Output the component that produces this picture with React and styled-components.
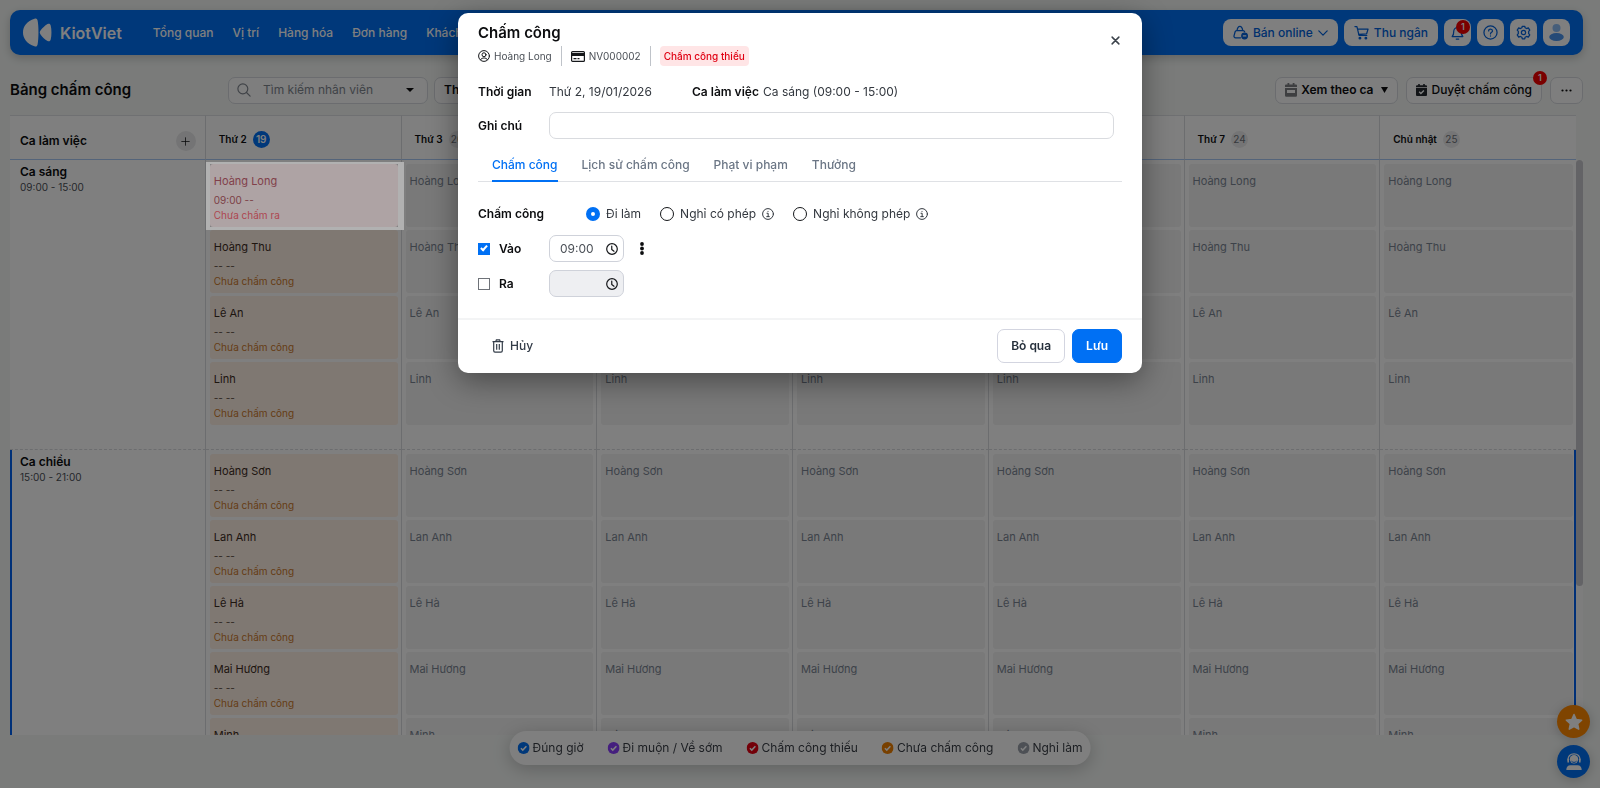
import React from "react";
import styled, { createGlobalStyle, css } from "styled-components";

const Global = createGlobalStyle`
  *, *::before, *::after { box-sizing: border-box; }
  body { margin: 0; background: #f4f7f5; font-family: Inter, "Liberation Sans", sans-serif; font-size: 12px; line-height: 16px; color: #0c0d0f; }
  button, input { font: inherit; color: inherit; }
  button { cursor: pointer; }
  h1, h2, p { margin: 0; }
`;

const Page = styled.div`
  height: 100vh;
  display: flex;
  flex-direction: column;
  padding: 10px 17px 53px 10px;
`;

const NavBar = styled.header`
  display: flex;
  align-items: center;
  height: 45px;
  flex: none;
  padding: 0 13px;
  border-radius: 10px;
  background: #0070f4;
  box-shadow: 0 3px 10px rgba(0, 0, 0, 0.2);
`;

const Brand = styled.a`
  display: flex;
  align-items: center;
  gap: 8px;
  margin-right: 31px;
  color: #fff;
  font-size: 16px;
  font-weight: 600;
  text-decoration: none;
`;

const Menu = styled.nav`
  display: flex;
  gap: 19px;
  flex: 1;
  min-width: 0;
`;

const MenuLink = styled.a`
  color: #fff;
  font-weight: 500;
  text-decoration: none;
  white-space: nowrap;
`;

const NavActions = styled.div`
  display: flex;
  gap: 6px;
  color: #0061dc;
`;

const NavButton = styled.button`
  position: relative;
  display: flex;
  align-items: center;
  justify-content: center;
  gap: 5px;
  height: 27px;
  min-width: 27px;
  padding: 0 ${(p) => (p.$wide ? "10px" : "0")};
  border: 0;
  border-radius: 8px;
  background: #fff;
  color: inherit;
  font-weight: 500;
`;

const CountBadge = styled.span`
  position: absolute;
  top: ${(p) => p.$top};
  right: ${(p) => p.$right};
  min-width: 14px;
  height: 14px;
  border-radius: 7px;
  background: #f50000;
  color: #fff;
  font-size: 9px;
  line-height: 14px;
  font-weight: 600;
  text-align: center;
`;

const Toolbar = styled.div`
  display: flex;
  align-items: center;
  flex: none;
  gap: 6px;
  height: 60px;
  padding-top: 10px;
`;

const PageTitle = styled.h1`
  width: 212px;
  font-size: 15px;
  line-height: 20px;
  font-weight: 600;
`;

const SearchBox = styled.label`
  display: flex;
  align-items: center;
  width: 200px;
  height: 27px;
  padding: 0 13px 0 8px;
  border: 1px solid #d6d9de;
  border-radius: 7px;
  background: #fcfcfc;

  > svg:first-child { color: #80868f; }

  input {
    flex: 1;
    min-width: 0;
    margin-left: 12px;
    border: 0;
    padding: 0;
    outline: 0;
    background: transparent;
  }
  input::placeholder { color: #80868f; }
`;

const ToolButton = styled.button`
  position: relative;
  display: flex;
  align-items: center;
  justify-content: center;
  gap: 4px;
  height: 27px;
  padding: 0 9px;
  border: 1px solid #d6d9de;
  border-radius: 7px;
  background: #fcfcfc;
  font-weight: ${(p) => (p.$medium ? 500 : 600)};
  white-space: nowrap;

  > svg + svg, > svg:last-child:not(:first-child) { margin-left: 4px; }
`;

const ToolActions = styled.div`
  display: flex;
  gap: 8px;
  margin-left: auto;
`;

const Board = styled.main`
  display: flex;
  flex: 1;
  min-height: 0;
`;

const BoardView = styled.div`
  flex: 1;
  min-width: 0;
  overflow: hidden;
  background: #fff;
`;

const ScrollTrack = styled.div`
  width: 7px;
  margin-top: 45px;
  background: #fafafa;

  &::before {
    content: "";
    display: block;
    height: 74%;
    border-radius: 4px;
    background: #c6c7cc;
  }
`;

const Schedule = styled.table`
  width: 100%;
  table-layout: fixed;
  border-spacing: 0;
`;

const HeadCell = styled.th`
  height: 45px;
  padding: 3px 13px 0;
  border-top: 1px solid #dfe1e5;
  border-right: ${(p) => (p.$last ? "0" : "1px solid #d8dade")};
  border-bottom: 1px solid #a9c9f5;
  text-align: left;
  font-size: 10px;
  font-weight: 600;

  > div { display: flex; align-items: center; gap: 6px; }
`;

const ShiftHead = styled(HeadCell)`
  padding: 7px 9px 0 10px;
  font-size: 12px;

  > div { justify-content: space-between; }
`;

const AddButton = styled.button`
  width: 20px;
  height: 20px;
  display: grid;
  place-items: center;
  padding: 0;
  border: 0;
  border-radius: 50%;
  background: #e8e9eb;
`;

const DayNumber = styled.span`
  width: 17px;
  height: 17px;
  border-radius: 50%;
  background: ${(p) => (p.$today ? "#0070f4" : "#ebebec")};
  color: ${(p) => (p.$today ? "#fff" : "#6d7279")};
  font-size: 10px;
  line-height: 17px;
  font-weight: ${(p) => (p.$today ? 600 : 400)};
  text-align: center;
`;

const divider = css`
  border-bottom: 1px dashed #d8dade;
`;

const ShiftCell = styled.th`
  padding: 4px 10px;
  border-right: 1px solid #d8dade;
  ${divider}
  box-shadow: ${(p) => (p.$current ? "inset 2px 0 0 #0061f0" : "none")};
  vertical-align: top;
  text-align: left;
  font-size: 12px;
  font-weight: 600;

  small { display: block; font-size: 10px; line-height: 14px; font-weight: 400; color: #4b5057; }
`;

const DayCell = styled.td`
  padding: 4px 3px 21px 4px;
  border-right: ${(p) => (p.$last ? "0" : "1px solid #d8dade")};
  ${divider}
  box-shadow: ${(p) => (p.$last && p.$current ? "inset -2px 0 0 #0061f0" : "none")};
  vertical-align: top;
`;

const tones = {
  idle: { bg: "#f2f2f2", name: "#7b8592", time: "#7b8592", status: "#7b8592" },
  pending: { bg: "#fff0e4", name: "#3c2c1e", time: "#5a4a3c", status: "#cb7a2c" },
  missing: { bg: "#aea3a4", name: "#81404a", time: "#7c4046", status: "#ad4650" },
};

const Entry = styled.div`
  height: 63px;
  margin-bottom: 3px;
  padding: 9px 4px 0;
  border-radius: 3px;
  background: ${(p) => tones[p.$tone].bg};
  color: ${(p) => tones[p.$tone].name};
  font-size: 11px;

  ${(p) =>
    p.$tone === "missing" &&
    css`
      position: relative;
      z-index: 11;

      &::before {
        content: "";
        position: absolute;
        inset: -2px -6px -3px -4px;
        border: solid #b1b1b1;
        border-width: 2px 6px 3px 4px;
      }
    `}

  p { font-size: 10px; line-height: 15px; color: ${(p) => tones[p.$tone].status}; }
  p:nth-of-type(1) { padding-top: 3px; line-height: 16px; color: ${(p) => tones[p.$tone].time}; }
`;

const Legend = styled.ul`
  position: fixed;
  left: 50%;
  bottom: 23px;
  transform: translateX(-50%);
  display: flex;
  gap: 24px;
  margin: 0;
  padding: 9px 8px;
  border-radius: 17px;
  background: #fff;
  box-shadow: 0 4px 18px rgba(0, 0, 0, 0.22);
  list-style: none;
  white-space: nowrap;
  color: #3a3f47;

  li { display: flex; align-items: center; gap: 3px; }
`;

const FloatStack = styled.div`
  position: fixed;
  right: 10px;
  bottom: 10px;
  display: flex;
  flex-direction: column;
  gap: 7px;
`;

const FloatButton = styled.button`
  display: grid;
  place-items: center;
  width: 33px;
  height: 33px;
  padding: 0;
  border: 0;
  border-radius: 50%;
  background: ${(p) => p.$color};
  color: #fff;
  box-shadow: 0 2px 12px rgba(0, 0, 0, 0.2);
`;

const Backdrop = styled.div`
  position: fixed;
  inset: 0;
  z-index: 10;
  background: rgba(0, 0, 0, 0.5);
`;

const DialogLayer = styled.div`
  position: fixed;
  inset: 0;
  z-index: 20;
  display: flex;
  justify-content: center;
  align-items: flex-start;
  padding: 13px 16px;
`;

const Dialog = styled.section`
  width: 100%;
  max-width: 684px;
  border-radius: 10px;
  background: #fff;
  box-shadow: 0 8px 30px rgba(0, 0, 0, 0.4);
`;

const DialogHead = styled.div`
  display: flex;
  justify-content: space-between;
  padding: 10px 20px 0;
`;

const DialogTitle = styled.h2`
  font-size: 15px;
  line-height: 20px;
  font-weight: 600;
`;

const CloseButton = styled.button`
  width: 14px;
  height: 14px;
  margin-top: 10px;
  padding: 0;
  border: 0;
  background: none;
  color: #3c434b;
  line-height: 0;
`;

const Meta = styled.div`
  display: flex;
  align-items: center;
  height: 20px;
  margin-top: 3px;
  font-size: 10px;
  color: #4b5057;

  > span { display: flex; align-items: center; gap: 4px; height: 20px; }
  > span + span { margin-left: 9px; padding-left: 9px; border-left: 1px solid #bfc3c9; }
  svg { color: #15171a; }
`;

const StatusTag = styled.b`
  padding: 2px 4px;
  border-radius: 4px;
  background: #ffe5e6;
  color: #e00012;
  font-weight: 500;
`;

const DialogBody = styled.div`
  padding: 0 20px;
`;

const Row = styled.div`
  display: flex;
  align-items: center;
  min-height: 27px;
  margin-top: ${(p) => p.$gap};
`;

const Label = styled.label`
  display: flex;
  align-items: center;
  gap: 9px;
  width: ${(p) => p.$width || "71px"};
  font-weight: 600;
`;

const Value = styled.span`
  width: ${(p) => p.$width || "auto"};
  color: #33383f;
`;

const NoteInput = styled.input`
  flex: 1;
  height: 27px;
  margin-right: 8px;
  padding: 0 10px;
  border: 1px solid #d9dbdf;
  border-radius: 7px;
`;

const Tabs = styled.div`
  display: flex;
  gap: 24px;
  margin-top: 11px;
  padding-left: 14px;
  border-bottom: 1px solid #dfe1e5;
`;

const Tab = styled.button`
  height: 32px;
  margin-bottom: -1px;
  padding: 0;
  border: 0;
  border-bottom: 2px solid ${(p) => (p.$active ? "#0070f4" : "transparent")};
  background: none;
  color: ${(p) => (p.$active ? "#0070f4" : "#6b7685")};
  font-weight: 500;
`;

const Choice = styled.label`
  display: flex;
  align-items: center;
  gap: 6px;
  margin-right: 19px;
  color: #33383f;
`;

const Radio = styled.input`
  appearance: none;
  width: 14px;
  height: 14px;
  margin: 0;
  border: 1px solid #15171a;
  border-radius: 50%;
  background: #fff;

  &:checked { border: 5px solid #0070f4; }
`;

const Checkbox = styled.input`
  appearance: none;
  display: grid;
  justify-content: center;
  width: 12px;
  height: 12px;
  margin: 0;
  border: 1px solid #6e7278;
  background: #fff;

  &:checked { border-color: #0070f4; background: #0070f4; }
  &:checked::before {
    content: "";
    width: 4px;
    height: 7px;
    border: solid #fff;
    border-width: 0 2px 2px 0;
    transform: rotate(42deg);
  }
`;

const TimeField = styled.span`
  display: flex;
  align-items: center;
  justify-content: space-between;
  width: 75px;
  height: 27px;
  padding: 0 5px 0 10px;
  border: 1px solid #cfd2da;
  border-radius: 7px;
  background: ${(p) => (p.$off ? "#eeeff2" : "#fff")};
  color: #15171a;

  input { width: 36px; padding: 0; border: 0; outline: 0; background: transparent; color: #4b5057; }
`;

const PlainButton = styled.button`
  display: flex;
  align-items: center;
  gap: 6px;
  padding: 0;
  margin-left: ${(p) => p.$left};
  border: 0;
  background: none;
  color: #333c48;
  font-weight: 500;
`;

const DialogFoot = styled.div`
  display: flex;
  align-items: center;
  gap: 7px;
  height: 55px;
  margin-top: 21px;
  padding: 0 20px 2px;
  border-top: 2px solid #f3f4f5;
`;

const FootButton = styled.button`
  height: 34px;
  padding: 0 13px;
  margin-left: ${(p) => (p.$first ? "auto" : "0")};
  border: 1px solid ${(p) => (p.$primary ? "#0070f4" : "#d3d5e0")};
  border-radius: 7px;
  background: ${(p) => (p.$primary ? "#0070f4" : "#fff")};
  color: ${(p) => (p.$primary ? "#fff" : "#26303c")};
  font-weight: 600;
`;

const Svg = ({ size = 14, w, h, box = "0 0 24 24", sw = 2, children }) => (
  <svg width={w || size} height={h || size} viewBox={box} fill="none" stroke="currentColor" strokeWidth={sw} strokeLinecap="round" strokeLinejoin="round" aria-hidden="true">
    {children}
  </svg>
);

const Logo = () => (
  <svg width="29" height="29" viewBox="0 0 29 29" fill="#fff" aria-hidden="true">
    <path d="M11.500.8c1.800-.6 2.700.1 3.100 1.800 1.200 5.500 1.200 18.300 0 23.800-.4 1.700-1.300 2.400-3.100 1.800C4 25.900 0 20.500 0 14.500S4 3.100 11.500.8z" />
    <path d="M17.500 12.600c2-2.600 4.300-4.900 7-6.500 1.700-.9 2.700-.4 3.200 1.300 1 4 1 10.200 0 14.200-.5 1.700-1.500 2.200-3.200 1.300-2.700-1.600-5-3.900-7-6.500-1-1.300-1-2.500 0-3.800z" />
  </svg>
);

const BagIcon = () => (
  <Svg size={15}>
    <path d="M12 20.500H4a2.500 2.500 0 0 1-2.400-3.100l1.800-6.600A2.500 2.500 0 0 1 5.800 9h10.400a2.500 2.500 0 0 1 2.400 1.800" />
    <path d="M6.500 8.500C7 5 8.500 2 11 2s4 3 4.500 6.500" />
    <circle cx="18.500" cy="17.500" r="4.500" fill="currentColor" />
    <path d="M16.500 17.500h4" stroke="#fff" />
  </Svg>
);
const CartIcon = () => (
  <Svg size={15}>
    <path d="M1.500 2.500h3.200l3.300 14h12.500M5.500 6.500h17l-2.300 7.500-12.800 1" />
    <circle cx="9.500" cy="21" r="1.300" />
    <circle cx="19" cy="21" r="1.300" />
  </Svg>
);
const BellIcon = () => (
  <Svg size={15}>
    <path d="M3.500 18.500h17c-2-2-2.500-3.500-2.500-8.500a6 6 0 0 0-12 0c0 5-.5 6.500-2.500 8.500zM10 22.500h4M12 4V2.500" />
  </Svg>
);
const HelpIcon = () => (
  <Svg size={15}>
    <circle cx="12" cy="12" r="10.500" />
    <path d="M9 9.500c0-4 6.200-3.800 6.200 0 0 2.300-3.200 2.300-3.200 4.800M12 17.500v.2" />
  </Svg>
);
const GearIcon = () => (
  <Svg size={15}>
    <circle cx="12" cy="12" r="3.400" />
    <path d="M9.500 4.300 10 2h4l.5 2.300 2.500 1.400 2.700-1.200 2.300 3.700-1.700 2v3.600l1.700 2-2.300 3.700-2.700-1.200-2.500 1.400L14 22h-4l-.5-2.300L7 18.300l-2.700 1.200L2 15.800l1.700-2v-3.600L2 8.200l2.300-3.700L7 5.700z" />
  </Svg>
);
const AvatarIcon = () => (
  <svg width="15" height="17" viewBox="0 0 15 17" aria-hidden="true">
    <circle cx="7.500" cy="4" r="4" fill="#8cbcf5" />
    <ellipse cx="7.500" cy="13" rx="7.300" ry="4" fill="#4a94ee" />
  </svg>
);
const Caret = ({ w = 8, h = 4 }) => (
  <svg width={w} height={h} viewBox="0 0 8 5" preserveAspectRatio="none" fill="currentColor" aria-hidden="true">
    <path d="M0 0h8L4 5z" />
  </svg>
);
const SearchIcon = () => (
  <Svg size={14} sw={2}>
    <circle cx="10" cy="10" r="8.500" />
    <path d="m16.300 16.300 6.200 6.200" />
  </Svg>
);
const CalendarIcon = () => (
  <svg width="12" height="14" viewBox="0 0 12 14" fill="#7c7f83" aria-hidden="true">
    <path d="M2.500 0h1.800v1.500h3.400V0h1.800v1.500H11a1 1 0 0 1 1 1V4H0V2.500a1 1 0 0 1 1-1h1.500zM0 5h12v7.500a1.200 1.200 0 0 1-1.200 1.200H1.200A1.200 1.200 0 0 1 0 12.500zm2 2v3h8V7z" fillRule="evenodd" />
  </svg>
);
const CalendarCheckIcon = () => (
  <svg width="11" height="12" viewBox="0 0 11 12" fill="#24292f" aria-hidden="true">
    <path d="M2.200 0h1.600v1.200h3.400V0h1.600v1.200H10a1 1 0 0 1 1 1V3.200H0v-1a1 1 0 0 1 1-1h1.200zM0 4h11v7a1 1 0 0 1-1 1H1a1 1 0 0 1-1-1z" />
    <path d="m3.200 7.700 1.700 1.700 3-3" stroke="#fff" strokeWidth="1.400" fill="none" />
  </svg>
);
const DotCheck = ({ color }) => (
  <svg width="12" height="12" viewBox="0 0 12 12" aria-hidden="true">
    <circle cx="6" cy="6" r="6" fill={color} />
    <path d="m3.300 6.200 1.900 1.900 3.600-3.800" stroke="#fff" strokeWidth="1.500" fill="none" />
  </svg>
);
const UserIcon = () => (
  <Svg size={12}>
    <circle cx="12" cy="12" r="10.800" />
    <circle cx="12" cy="9.500" r="4" />
    <path d="M5 19.500c2.500-5 11.500-5 14 0" />
  </Svg>
);
const CardIcon = () => (
  <svg width="14" height="11" viewBox="0 0 14 11" aria-hidden="true">
    <rect x=".6" y=".6" width="12.800" height="9.800" rx="1" fill="none" stroke="#15171a" strokeWidth="1.200" />
    <path d="M0 2h14v3H0zM2.500 7h3v1.200h-3zM6.500 7h2v1.200h-2z" fill="#15171a" />
  </svg>
);
const InfoIcon = () => (
  <Svg size={12}>
    <circle cx="12" cy="12" r="10.800" />
    <path d="M10 10.500h2.300V17M9.500 17.300h5.200M12 6.700v.2" />
  </Svg>
);
const ClockIcon = () => (
  <Svg size={12} sw={2.4}>
    <circle cx="12" cy="12" r="10.600" />
    <path d="M11.500 6v7l4.500 3.500" />
  </Svg>
);
const MoreIcon = () => (
  <svg width="4" height="13" viewBox="0 0 4 13" fill="#0c0d0f" aria-hidden="true">
    <circle cx="2" cy="2" r="1.900" />
    <circle cx="2" cy="6.500" r="1.900" />
    <circle cx="2" cy="11" r="1.900" />
  </svg>
);
const TrashIcon = () => (
  <svg width="12" height="14" viewBox="0 0 12 14" fill="none" stroke="currentColor" strokeWidth="1.200" aria-hidden="true">
    <path d="M.5 2.600h11M3.800 2.400l.6-1.600h3.200l.6 1.600M1.700 2.800v9a1.300 1.300 0 0 0 1.300 1.300h6a1.300 1.300 0 0 0 1.300-1.300v-9M4.700 5v5.800M7.300 5v5.800" />
  </svg>
);
const StarIcon = () => (
  <svg width="18" height="18" viewBox="0 0 24 24" fill="currentColor" stroke="currentColor" strokeWidth="2" strokeLinejoin="round" aria-hidden="true">
    <path d="m12 2 3 6.600 7.200.9-5.300 4.900 1.400 7.100L12 18l-6.300 3.500 1.400-7.100L1.800 9.500 9 8.600z" />
  </svg>
);
const SupportIcon = () => (
  <svg width="16" height="18" viewBox="0 0 16 18" aria-hidden="true">
    <circle cx="8" cy="6.300" r="4.200" fill="#fff" />
    <path d="M2 7.500C1.500 3 4.500.8 8 .8S14.500 3 14 7.500" fill="none" stroke="#fff" strokeWidth="1.200" />
    <path d="M1.400 5.500h1.600v4H1.400zM13 5.500h1.600v4H13zM.3 17c0-3.200 1.700-4.800 4-4.800h7.400c2.300 0 4 1.600 4 4.800z" fill="#fff" />
    <path d="M5.500 8.200c1.500 1.600 3.500 1.600 5 0" fill="none" stroke="#0070f4" />
  </svg>
);

const days = [
  ["Thứ 2", 19],
  ["Thứ 3", 20],
  ["Thứ 4", 21],
  ["Thứ 5", 22],
  ["Thứ 6", 23],
  ["Thứ 7", 24],
  ["Chủ nhật", 25],
];

const shifts = [
  { name: "Ca sáng", time: "09:00 - 15:00", staff: ["Hoàng Long", "Hoàng Thu", "Lê An", "Linh"] },
  { name: "Ca chiều", time: "15:00 - 21:00", current: true, staff: ["Hoàng Sơn", "Lan Anh", "Lê Hà", "Mai Hương", "Minh"] },
];

const legend = [
  ["Đúng giờ", "#0070f4"],
  ["Đi muộn / Về sớm", "#8a3ffc"],
  ["Chấm công thiếu", "#e60012"],
  ["Chưa chấm công", "#f08000"],
  ["Nghỉ làm", "#9aa0ab"],
];

const menu = ["Tổng quan", "Vị trí", "Hàng hóa", "Đơn hàng", "Khách hàng"];

function StaffEntry({ name, dayIndex }) {
  if (dayIndex > 0) return <Entry $tone="idle">{name}</Entry>;
  const missing = name === "Hoàng Long";
  return (
    <Entry $tone={missing ? "missing" : "pending"}>
      {name}
      <p>{missing ? "09:00 --" : "-- --"}</p>
      <p>{missing ? "Chưa chấm ra" : "Chưa chấm công"}</p>
    </Entry>
  );
}

export default function App() {
  return (
    <>
      <Global />
      <Page>
        <NavBar>
          <Brand href="#"><Logo />KiotViet</Brand>
          <Menu>{menu.map((m) => <MenuLink href="#" key={m}>{m}</MenuLink>)}</Menu>
          <NavActions>
            <NavButton $wide><BagIcon />Bán online<Svg w={10} h={10} sw={3}><path d="m2 7 10 10L22 7" /></Svg></NavButton>
            <NavButton $wide><CartIcon />Thu ngân</NavButton>
            <NavButton aria-label="Thông báo"><BellIcon /><CountBadge $top="1px" $right="1px">1</CountBadge></NavButton>
            <NavButton aria-label="Trợ giúp"><HelpIcon /></NavButton>
            <NavButton aria-label="Cài đặt"><GearIcon /></NavButton>
            <NavButton aria-label="Tài khoản"><AvatarIcon /></NavButton>
          </NavActions>
        </NavBar>

        <Toolbar>
          <PageTitle>Bảng chấm công</PageTitle>
          <SearchBox>
            <SearchIcon />
            <input aria-label="Tìm kiếm nhân viên" placeholder="Tìm kiếm nhân viên" />
            <Caret />
          </SearchBox>
          <ToolButton>Theo tuần</ToolButton>
          <ToolActions>
            <ToolButton><CalendarIcon />Xem theo ca<Caret w={7} h={6} /></ToolButton>
            <ToolButton $medium><CalendarCheckIcon />Duyệt chấm công<CountBadge $top="-7px" $right="-6px">1</CountBadge></ToolButton>
            <ToolButton aria-label="Thêm">
              <svg width="13" height="3" viewBox="0 0 13 3" fill="currentColor" aria-hidden="true"><circle cx="2.500" cy="1.500" r="1.100" /><circle cx="6.500" cy="1.500" r="1.100" /><circle cx="10.500" cy="1.500" r="1.100" /></svg>
            </ToolButton>
          </ToolActions>
        </Toolbar>

        <Board>
          <BoardView>
            <Schedule>
              <thead>
                <tr>
                  <ShiftHead><div>Ca làm việc<AddButton aria-label="Thêm ca"><Svg size={9} sw={2}><path d="M12 2v20M2 12h20" /></Svg></AddButton></div></ShiftHead>
                  {days.map(([d, n], i) => (
                    <HeadCell key={d} $last={i === 6}><div>{d}<DayNumber $today={i === 0}>{n}</DayNumber></div></HeadCell>
                  ))}
                </tr>
              </thead>
              <tbody>
                {shifts.map((s) => (
                  <tr key={s.name}>
                    <ShiftCell scope="row" $current={s.current}>{s.name}<small>{s.time}</small></ShiftCell>
                    {days.map(([d], i) => (
                      <DayCell key={d} $last={i === 6} $current={s.current}>
                        {s.staff.map((n) => <StaffEntry key={n} name={n} dayIndex={i} />)}
                      </DayCell>
                    ))}
                  </tr>
                ))}
              </tbody>
            </Schedule>
          </BoardView>
          <ScrollTrack />
        </Board>
      </Page>

      <Legend>{legend.map(([t, c]) => <li key={t}><DotCheck color={c} />{t}</li>)}</Legend>
      <FloatStack>
        <FloatButton $color="#ff8800" aria-label="Đánh giá"><StarIcon /></FloatButton>
        <FloatButton $color="#0070f4" aria-label="Hỗ trợ"><SupportIcon /></FloatButton>
      </FloatStack>

      <Backdrop />
      <DialogLayer>
        <Dialog role="dialog" aria-labelledby="dialog-title">
          <DialogHead>
            <div>
              <DialogTitle id="dialog-title">Chấm công</DialogTitle>
              <Meta>
                <span><UserIcon />Hoàng Long</span>
                <span><CardIcon />NV000002</span>
                <span><StatusTag>Chấm công thiếu</StatusTag></span>
              </Meta>
            </div>
            <CloseButton aria-label="Đóng"><Svg size={9} sw={4}><path d="m3 3 18 18M21 3 3 21" /></Svg></CloseButton>
          </DialogHead>
          <DialogBody>
            <Row $gap="12px">
              <Label as="span">Thời gian</Label>
              <Value $width="143px">Thứ 2, 19/01/2026</Value>
              <Label as="span">Ca làm việc</Label>
              <Value>Ca sáng (09:00 - 15:00)</Value>
            </Row>
            <Row $gap="7px">
              <Label htmlFor="note">Ghi chú</Label>
              <NoteInput id="note" />
            </Row>
            <Tabs role="tablist">
              <Tab role="tab" $active>Chấm công</Tab>
              <Tab role="tab">Lịch sử chấm công</Tab>
              <Tab role="tab">Phạt vi phạm</Tab>
              <Tab role="tab">Thưởng</Tab>
            </Tabs>
            <Row $gap="18px">
              <Label as="span" $width="108px">Chấm công</Label>
              <Choice><Radio type="radio" name="kind" defaultChecked />Đi làm</Choice>
              <Choice><Radio type="radio" name="kind" />Nghỉ có phép<InfoIcon /></Choice>
              <Choice><Radio type="radio" name="kind" />Nghỉ không phép<InfoIcon /></Choice>
            </Row>
            <Row $gap="8px">
              <Label><Checkbox type="checkbox" defaultChecked />Vào</Label>
              <TimeField><input aria-label="Giờ vào" defaultValue="09:00" /><ClockIcon /></TimeField>
              <PlainButton $left="16px" aria-label="Tùy chọn"><MoreIcon /></PlainButton>
            </Row>
            <Row $gap="8px">
              <Label><Checkbox type="checkbox" />Ra</Label>
              <TimeField $off><input aria-label="Giờ ra" disabled /><ClockIcon /></TimeField>
            </Row>
          </DialogBody>
          <DialogFoot>
            <PlainButton $left="14px"><TrashIcon />Hủy</PlainButton>
            <FootButton $first>Bỏ qua</FootButton>
            <FootButton $primary>Lưu</FootButton>
          </DialogFoot>
        </Dialog>
      </DialogLayer>
    </>
  );
}
